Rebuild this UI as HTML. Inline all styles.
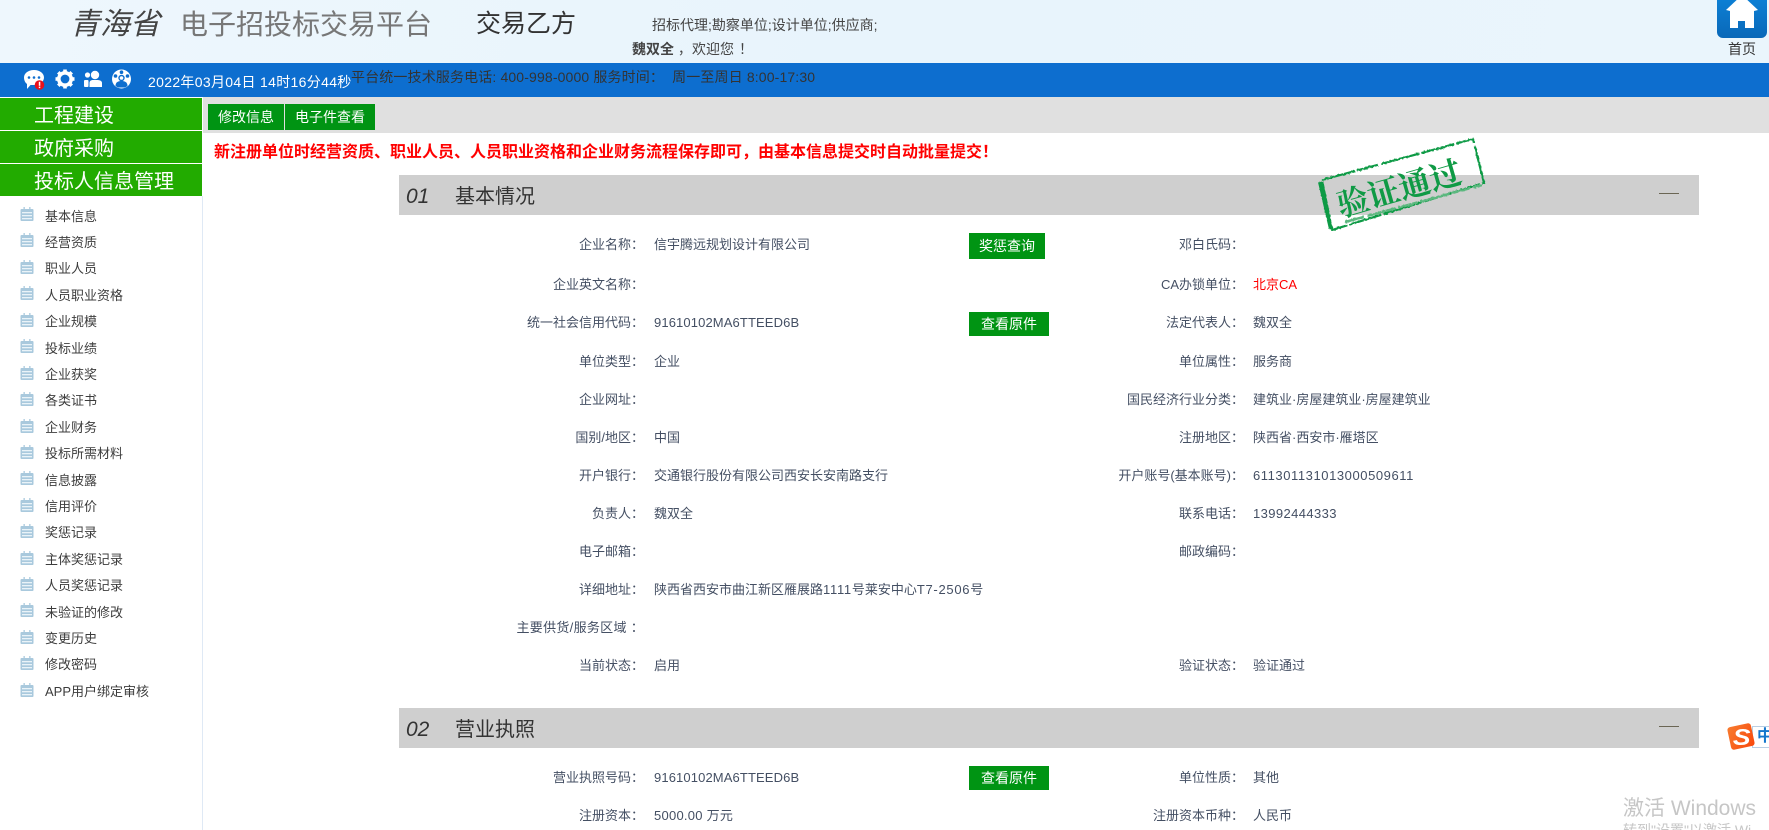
<!DOCTYPE html>
<html lang="zh-CN">
<head>
<meta charset="utf-8">
<title>电子招投标交易平台</title>
<style>
html,body{margin:0;padding:0;width:1769px;height:830px;overflow:hidden;background:#fff;}
body{position:relative;font-family:"Liberation Sans","Noto Sans CJK SC",sans-serif;font-size:13px;color:#444f63;}
.a{position:absolute;white-space:pre;line-height:20px;}
.box{position:absolute;}
.l{position:absolute;white-space:pre;line-height:20px;text-align:right;width:300px;margin:1px 0 0 8px;}
.v{position:absolute;white-space:pre;line-height:20px;margin-top:1px;}
.nav{position:absolute;left:0;width:202px;height:32px;background:#22ab00;color:#fff;font-size:20px;line-height:32px;padding-left:0;}
.nav span{position:absolute;left:34px;top:2px;}
.m{position:absolute;left:45px;color:#3c3c3c;line-height:20px;white-space:pre;margin-top:1px;}
.ic{position:absolute;left:20px;width:14px;height:14px;}
.btn{position:absolute;background:#009413;color:#fff;text-align:center;font-size:14px;}
.sec{position:absolute;left:399px;width:1300px;height:40px;background:#cfcfcf;}
.sec i{position:absolute;left:7px;top:9px;font-size:21px;line-height:26px;color:#333;}
.sec b{position:absolute;left:56px;top:8px;font-weight:normal;font-size:20px;line-height:28px;color:#333;}
.sec u{position:absolute;left:1260px;top:18px;width:20px;height:1px;background:#6b6654;}
</style>
</head>
<body>
<!-- header -->
<div class="box" style="left:0;top:0;width:1769px;height:63px;background:linear-gradient(100deg,#eef7fd 0%,#e8f4fc 50%,#eaf5fc 100%);"></div>
<div class="a" style="left:70px;top:7px;font-size:30px;line-height:36px;font-style:italic;color:#444;">青海省</div>
<div class="a" style="left:180px;top:7px;font-size:28px;line-height:36px;color:#777;">电子招投标交易平台</div>
<div class="a" style="left:476px;top:6px;font-size:25px;line-height:36px;color:#333;">交易乙方</div>
<div class="a" style="left:652px;top:15px;font-size:14px;color:#444;">招标代理;勘察单位;设计单位;供应商;</div>
<div class="a" style="left:632px;top:39px;font-size:14px;color:#444;"><b>魏双全</b> ，</div>
<div class="a" style="left:692px;top:39px;font-size:14px;color:#444;">欢迎您<span style="margin-left:5px;">！</span></div>

<!-- home -->
<div class="box" style="left:1717px;top:0;width:50px;height:38px;background:linear-gradient(#0c7fd4,#0a68b8);border-radius:0 0 6px 6px;"></div>
<svg class="box" style="left:1717px;top:0;" width="50" height="38" viewBox="0 0 50 38"><path d="M9 10 L25 -5 L41 10 L37 11 L37 28 L28 28 L28 21 L21 21 L21 28 L13 28 L13 11 Z" fill="#fff"/></svg>
<div class="a" style="left:1728px;top:39px;font-size:14px;color:#333;">首页</div>

<!-- blue bar -->
<div class="box" style="left:0;top:63px;width:1769px;height:34px;background:#0d6ecf;"></div>
<svg class="box" style="left:20px;top:66px;" width="120" height="28" viewBox="0 0 120 28">
  <g fill="#fff">
    <path d="M14 4 C20 4 24 7.500 24 11.500 C24 15.500 20 19 14 19 L10.500 19 L7 23 L7 18 C5 16.500 4 14 4 11.500 C4 7.500 8 4 14 4 Z"/>
  </g>
  <circle cx="9" cy="11.500" r="1.300" fill="#0d6ecf"/><circle cx="14" cy="11.500" r="1.300" fill="#0d6ecf"/><circle cx="19" cy="11.500" r="1.300" fill="#0d6ecf"/>
  <circle cx="19.500" cy="19" r="4.800" fill="#e8101c"/>
  <rect x="18.800" y="15.800" width="1.500" height="4" fill="#fff"/><rect x="18.800" y="20.600" width="1.500" height="1.500" fill="#fff"/>
  <!-- gear -->
  <g transform="translate(45,13)">
    <circle r="6.200" fill="none" stroke="#fff" stroke-width="3.600"/>
    <g fill="#fff">
      <rect x="-1.800" y="-9.500" width="3.600" height="4"/><rect x="-1.800" y="5.500" width="3.600" height="4"/>
      <rect x="-9.500" y="-1.800" width="4" height="3.600"/><rect x="5.500" y="-1.800" width="4" height="3.600"/>
      <rect x="-1.800" y="-9.500" width="3.600" height="4" transform="rotate(45)"/><rect x="-1.800" y="5.500" width="3.600" height="4" transform="rotate(45)"/>
      <rect x="-9.500" y="-1.800" width="4" height="3.600" transform="rotate(45)"/><rect x="5.500" y="-1.800" width="4" height="3.600" transform="rotate(45)"/>
    </g>
  </g>
  <!-- users -->
  <g fill="#fff">
    <circle cx="75" cy="9" r="4.200"/>
    <path d="M69.500 21 L69.500 17 C69.500 15 71 14 73 14 L77 14 C80 14 82 15 82 17 L82 21 Z"/>
    <circle cx="67.500" cy="9" r="2.600"/>
    <rect x="64" y="14" width="4.500" height="7" rx="1"/>
  </g>
  <!-- circle people -->
  <g transform="translate(101.500,13)">
    <circle r="9.500" fill="#fff"/>
    <circle cy="-1" r="3.200" fill="#0d6ecf"/>
    <path d="M-6 7 C-6 3 -3 2 0 2 C3 2 6 3 6 7 L3.500 8.500 L-3.500 8.500 Z" fill="#0d6ecf"/>
    <circle cx="-6" cy="-3" r="1.800" fill="#0d6ecf"/><circle cx="6" cy="-3" r="1.800" fill="#0d6ecf"/>
    <circle cy="-6.800" r="1.800" fill="#0d6ecf"/>
    <circle cy="-1" r="1.800" fill="#fff"/>
  </g>
</svg>
<div class="a" style="left:148px;top:72px;font-size:14px;color:#fff;letter-spacing:.32px;">2022年03月04日 14时16分44秒</div>
<div class="a" style="left:351px;top:67px;font-size:14px;color:#333;letter-spacing:.14px;">平台统一技术服务电话: 400-998-0000 服务时间：  周一至周日 8:00-17:30</div>

<!-- gray strip -->
<div class="box" style="left:203px;top:97px;width:1566px;height:36px;background:#e0e0e0;"></div>
<div class="btn" style="left:208px;top:104px;width:76px;height:26px;line-height:26px;">修改信息</div>
<div class="btn" style="left:285px;top:104px;width:90px;height:26px;line-height:26px;">电子件查看</div>

<!-- sidebar -->
<div class="box" style="left:202px;top:196px;width:1px;height:634px;background:#dfe9f5;"></div>
<div class="nav" style="top:98px;"><span>工程建设</span></div>
<div class="nav" style="top:131px;"><span>政府采购</span></div>
<div class="nav" style="top:164px;"><span>投标人信息管理</span></div>

<svg width="0" height="0" style="position:absolute"><defs><g id="nb"><rect x="0.500" y="2" width="13" height="12" rx="1" fill="#a9c9dd"/><rect x="2" y="5" width="10" height="1.300" fill="#eaf3f8"/><rect x="2" y="8" width="10" height="1.300" fill="#eaf3f8"/><rect x="2" y="11" width="10" height="1.300" fill="#eaf3f8"/><rect x="3.500" y="0" width="1.300" height="3.500" fill="#a9c9dd"/><rect x="9.200" y="0" width="1.300" height="3.500" fill="#a9c9dd"/></g></defs></svg>

<svg class="ic" style="top:207px"><use href="#nb"/></svg><div class="m" style="top:206px">基本信息</div>
<svg class="ic" style="top:233px"><use href="#nb"/></svg><div class="m" style="top:232px">经营资质</div>
<svg class="ic" style="top:260px"><use href="#nb"/></svg><div class="m" style="top:258px">职业人员</div>
<svg class="ic" style="top:286px"><use href="#nb"/></svg><div class="m" style="top:285px">人员职业资格</div>
<svg class="ic" style="top:313px"><use href="#nb"/></svg><div class="m" style="top:311px">企业规模</div>
<svg class="ic" style="top:339px"><use href="#nb"/></svg><div class="m" style="top:338px">投标业绩</div>
<svg class="ic" style="top:366px"><use href="#nb"/></svg><div class="m" style="top:364px">企业获奖</div>
<svg class="ic" style="top:392px"><use href="#nb"/></svg><div class="m" style="top:390px">各类证书</div>
<svg class="ic" style="top:419px"><use href="#nb"/></svg><div class="m" style="top:417px">企业财务</div>
<svg class="ic" style="top:445px"><use href="#nb"/></svg><div class="m" style="top:443px">投标所需材料</div>
<svg class="ic" style="top:471px"><use href="#nb"/></svg><div class="m" style="top:470px">信息披露</div>
<svg class="ic" style="top:498px"><use href="#nb"/></svg><div class="m" style="top:496px">信用评价</div>
<svg class="ic" style="top:524px"><use href="#nb"/></svg><div class="m" style="top:522px">奖惩记录</div>
<svg class="ic" style="top:551px"><use href="#nb"/></svg><div class="m" style="top:549px">主体奖惩记录</div>
<svg class="ic" style="top:577px"><use href="#nb"/></svg><div class="m" style="top:575px">人员奖惩记录</div>
<svg class="ic" style="top:603px"><use href="#nb"/></svg><div class="m" style="top:602px">未验证的修改</div>
<svg class="ic" style="top:630px"><use href="#nb"/></svg><div class="m" style="top:628px">变更历史</div>
<svg class="ic" style="top:656px"><use href="#nb"/></svg><div class="m" style="top:654px">修改密码</div>
<svg class="ic" style="top:683px"><use href="#nb"/></svg><div class="m" style="top:681px">APP用户绑定审核</div>

<!-- notice -->
<div class="a" style="left:214px;top:143px;font-size:16px;font-weight:bold;color:#f00;">新注册单位时经营资质、职业人员、人员职业资格和企业财务流程保存即可，由基本信息提交时自动批量提交！</div>

<!-- section 1 -->
<div class="sec" style="top:175px;"><i>01</i><b>基本情况</b><u></u></div>

<div class="l" style="left:336px;top:234px;">企业名称：</div><div class="v" style="left:654px;top:234px;">信宇腾远规划设计有限公司</div>
<div class="btn" style="left:969px;top:233px;width:76px;height:26px;line-height:26px;">奖惩查询</div>
<div class="l" style="left:936px;top:234px;">邓白氏码：</div>

<div class="l" style="left:336px;top:274px;">企业英文名称：</div>
<div class="l" style="left:936px;top:274px;">CA办锁单位：</div><div class="v" style="left:1253px;top:274px;color:#f00;">北京CA</div>

<div class="l" style="left:336px;top:312px;">统一社会信用代码：</div><div class="v" style="left:654px;top:312px;letter-spacing:.12px;">91610102MA6TTEED6B</div>
<div class="btn" style="left:969px;top:312px;width:80px;height:24px;line-height:24px;">查看原件</div>
<div class="l" style="left:936px;top:312px;">法定代表人：</div><div class="v" style="left:1253px;top:312px;">魏双全</div>

<div class="l" style="left:336px;top:351px;">单位类型：</div><div class="v" style="left:654px;top:351px;">企业</div>
<div class="l" style="left:936px;top:351px;">单位属性：</div><div class="v" style="left:1253px;top:351px;">服务商</div>

<div class="l" style="left:336px;top:389px;">企业网址：</div>
<div class="l" style="left:936px;top:389px;">国民经济行业分类：</div><div class="v" style="left:1253px;top:389px;">建筑业·房屋建筑业·房屋建筑业</div>

<div class="l" style="left:336px;top:427px;">国别/地区：</div><div class="v" style="left:654px;top:427px;">中国</div>
<div class="l" style="left:936px;top:427px;">注册地区：</div><div class="v" style="left:1253px;top:427px;">陕西省·西安市·雁塔区</div>

<div class="l" style="left:336px;top:465px;">开户银行：</div><div class="v" style="left:654px;top:465px;">交通银行股份有限公司西安长安南路支行</div>
<div class="l" style="left:936px;top:465px;">开户账号(基本账号)：</div><div class="v" style="left:1253px;top:465px;letter-spacing:.57px;">611301131013000509611</div>

<div class="l" style="left:336px;top:503px;">负责人：</div><div class="v" style="left:654px;top:503px;">魏双全</div>
<div class="l" style="left:936px;top:503px;">联系电话：</div><div class="v" style="left:1253px;top:503px;letter-spacing:.4px;">13992444333</div>

<div class="l" style="left:336px;top:541px;">电子邮箱：</div>
<div class="l" style="left:936px;top:541px;">邮政编码：</div>

<div class="l" style="left:336px;top:579px;">详细地址：</div><div class="v" style="left:654px;top:579px;">陕西省西安市曲江新区雁展路<span style="letter-spacing:.7px;">1111</span>号莱安中心<span style="letter-spacing:.7px;">T7-2506</span>号</div>

<div class="l" style="left:336px;top:617px;letter-spacing:.3px;">主要供货/服务区域 ：</div>

<div class="l" style="left:336px;top:655px;">当前状态：</div><div class="v" style="left:654px;top:655px;">启用</div>
<div class="l" style="left:936px;top:655px;">验证状态：</div><div class="v" style="left:1253px;top:655px;">验证通过</div>

<!-- section 2 -->
<div class="sec" style="top:708px;"><i>02</i><b>营业执照</b><u></u></div>

<div class="l" style="left:336px;top:767px;">营业执照号码：</div><div class="v" style="left:654px;top:767px;letter-spacing:.12px;">91610102MA6TTEED6B</div>
<div class="btn" style="left:969px;top:766px;width:80px;height:24px;line-height:24px;">查看原件</div>
<div class="l" style="left:936px;top:767px;">单位性质：</div><div class="v" style="left:1253px;top:767px;">其他</div>

<div class="l" style="left:336px;top:805px;">注册资本：</div><div class="v" style="left:654px;top:805px;letter-spacing:.25px;">5000.00 万元</div>
<div class="l" style="left:936px;top:805px;">注册资本币种：</div><div class="v" style="left:1253px;top:805px;">人民币</div>

<!-- stamp -->
<svg class="box" style="left:1310px;top:130px;" width="185" height="110" viewBox="1310 130 185 110">
  <defs>
    <filter id="rough" x="-5%" y="-5%" width="110%" height="110%">
      <feTurbulence type="fractalNoise" baseFrequency="0.35" numOctaves="2" seed="4"/>
      <feDisplacementMap in="SourceGraphic" scale="2.200"/>
    </filter>
  </defs>
  <g filter="url(#rough)">
    <polygon points="1322,180 1473,139 1484,183 1332,230" fill="none" stroke="#0f9a45" stroke-width="2.200" stroke-dasharray="34 2 22 3 40 2"/>
    <path d="M1320,182 L1331,229" stroke="#0f9a45" stroke-width="4" fill="none"/>
    <path d="M1345,222 L1482,185" stroke="#5cb87f" stroke-width="2.500" fill="none" stroke-dasharray="20 3 30 2"/>
  </g>
  <text x="1399" y="200" text-anchor="middle" transform="rotate(-16 1399 188)" font-family="'Noto Serif CJK SC','Liberation Serif',serif" font-weight="bold" font-size="32" fill="#0f9a45">验证通过</text>
</svg>

<!-- sogou -->
<div class="box" style="left:1752px;top:726px;width:20px;height:22px;background:#fff;border:1px solid #b9cfe4;box-sizing:border-box;"></div>
<div class="a" style="left:1757px;top:727px;font-size:16px;font-weight:bold;color:#1476cc;">中</div>
<div class="box" style="left:1729px;top:725px;width:24px;height:23px;background:linear-gradient(135deg,#f77b2e,#f9480c);border-radius:3px;transform:rotate(-12deg);"></div>
<div class="a" style="left:1734px;top:727px;font-size:23px;font-weight:bold;font-style:italic;color:#fff;transform:scaleX(1.15);">S</div>

<!-- watermark -->
<div class="a" style="left:1623px;top:799px;font-size:21px;color:#c6c6c6;">激活 Windows</div>
<div class="a" style="left:1623px;top:820px;font-size:14px;color:#c6c6c6;">转到"设置"以激活 Wi</div>
</body>
</html>
